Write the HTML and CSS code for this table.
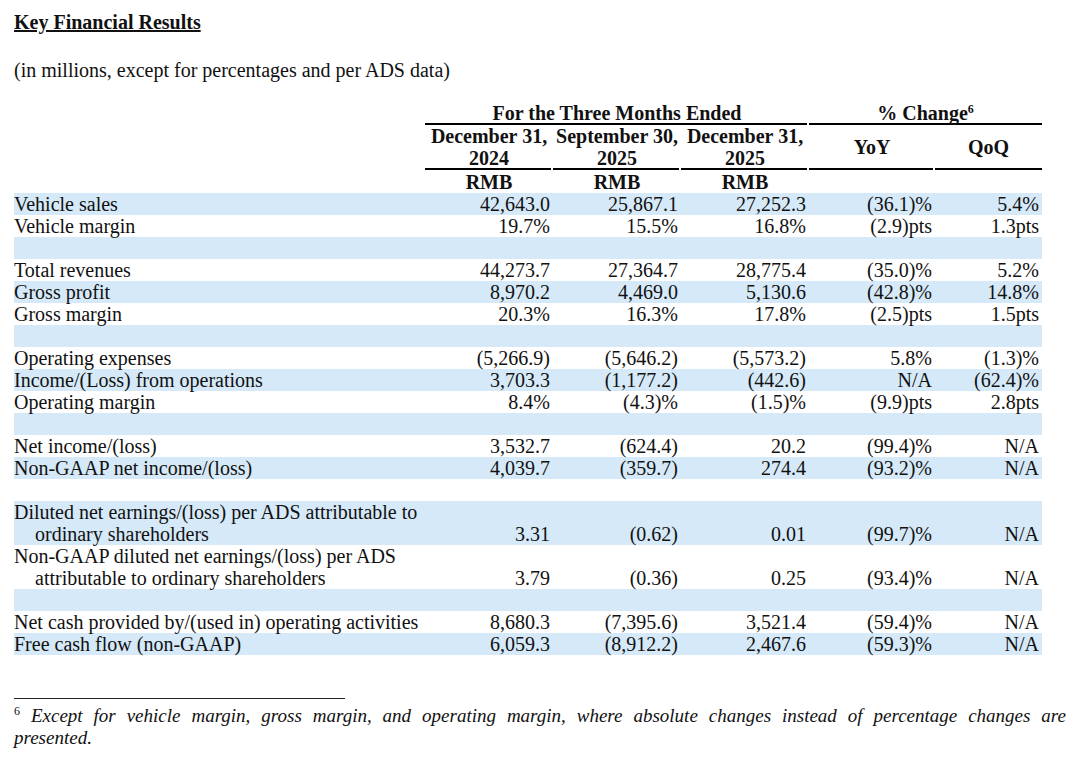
FILE: index.html
```html
<!DOCTYPE html>
<html lang="en">
<head>
  <meta charset="UTF-8">
  <title>Key Financial Results</title>
  <link rel="stylesheet" href="styles.css">
</head>
<body>

  <!-- Heading -->
  <h1 class="title">Key Financial Results</h1>
  <p class="units">(in millions, except for percentages and per ADS data)</p>

  <!-- Results table -->
  <table class="results">
    <colgroup>
      <col class="col-label">
      <col class="col-period">
      <col class="col-period">
      <col class="col-period">
      <col class="col-yoy">
      <col class="col-qoq">
    </colgroup>
    <thead>
      <tr>
        <th></th>
        <th colspan="3" class="rule">For the Three Months Ended</th>
        <th colspan="2" class="rule rule-end">% Change<sup>6</sup></th>
      </tr>
      <tr>
        <th></th>
        <th class="rule">December 31,<br>2024</th>
        <th class="rule">September 30,<br>2025</th>
        <th class="rule">December 31,<br>2025</th>
        <th class="rule">YoY</th>
        <th class="rule rule-end">QoQ</th>
      </tr>
      <tr class="currency">
        <th></th>
        <th>RMB</th>
        <th>RMB</th>
        <th>RMB</th>
        <th></th>
        <th></th>
      </tr>
    </thead>
    <tbody>
      <tr class="shade">
        <td class="label">Vehicle sales</td>
        <td class="num">42,643.0</td><td class="num">25,867.1</td><td class="num">27,252.3</td>
        <td class="num">(36.1)%</td><td class="num">5.4%</td>
      </tr>
      <tr>
        <td class="label">Vehicle margin</td>
        <td class="num">19.7%</td><td class="num">15.5%</td><td class="num">16.8%</td>
        <td class="num">(2.9)pts</td><td class="num">1.3pts</td>
      </tr>
      <tr class="shade blank"><td colspan="6"></td></tr>

      <tr>
        <td class="label">Total revenues</td>
        <td class="num">44,273.7</td><td class="num">27,364.7</td><td class="num">28,775.4</td>
        <td class="num">(35.0)%</td><td class="num">5.2%</td>
      </tr>
      <tr class="shade">
        <td class="label">Gross profit</td>
        <td class="num">8,970.2</td><td class="num">4,469.0</td><td class="num">5,130.6</td>
        <td class="num">(42.8)%</td><td class="num">14.8%</td>
      </tr>
      <tr>
        <td class="label">Gross margin</td>
        <td class="num">20.3%</td><td class="num">16.3%</td><td class="num">17.8%</td>
        <td class="num">(2.5)pts</td><td class="num">1.5pts</td>
      </tr>
      <tr class="shade blank"><td colspan="6"></td></tr>

      <tr>
        <td class="label">Operating expenses</td>
        <td class="num">(5,266.9)</td><td class="num">(5,646.2)</td><td class="num">(5,573.2)</td>
        <td class="num">5.8%</td><td class="num">(1.3)%</td>
      </tr>
      <tr class="shade">
        <td class="label">Income/(Loss) from operations</td>
        <td class="num">3,703.3</td><td class="num">(1,177.2)</td><td class="num">(442.6)</td>
        <td class="num">N/A</td><td class="num">(62.4)%</td>
      </tr>
      <tr>
        <td class="label">Operating margin</td>
        <td class="num">8.4%</td><td class="num">(4.3)%</td><td class="num">(1.5)%</td>
        <td class="num">(9.9)pts</td><td class="num">2.8pts</td>
      </tr>
      <tr class="shade blank"><td colspan="6"></td></tr>

      <tr>
        <td class="label">Net income/(loss)</td>
        <td class="num">3,532.7</td><td class="num">(624.4)</td><td class="num">20.2</td>
        <td class="num">(99.4)%</td><td class="num">N/A</td>
      </tr>
      <tr class="shade">
        <td class="label">Non-GAAP net income/(loss)</td>
        <td class="num">4,039.7</td><td class="num">(359.7)</td><td class="num">274.4</td>
        <td class="num">(93.2)%</td><td class="num">N/A</td>
      </tr>
      <tr class="blank"><td colspan="6"></td></tr>

      <tr class="shade">
        <td class="label wrap">Diluted net earnings/(loss) per ADS attributable to<br>ordinary shareholders</td>
        <td class="num">3.31</td><td class="num">(0.62)</td><td class="num">0.01</td>
        <td class="num">(99.7)%</td><td class="num">N/A</td>
      </tr>
      <tr>
        <td class="label wrap">Non-GAAP diluted net earnings/(loss) per ADS<br>attributable to ordinary shareholders</td>
        <td class="num">3.79</td><td class="num">(0.36)</td><td class="num">0.25</td>
        <td class="num">(93.4)%</td><td class="num">N/A</td>
      </tr>
      <tr class="shade blank"><td colspan="6"></td></tr>

      <tr>
        <td class="label">Net cash provided by/(used in) operating activities</td>
        <td class="num">8,680.3</td><td class="num">(7,395.6)</td><td class="num">3,521.4</td>
        <td class="num">(59.4)%</td><td class="num">N/A</td>
      </tr>
      <tr class="shade">
        <td class="label">Free cash flow (non-GAAP)</td>
        <td class="num">6,059.3</td><td class="num">(8,912.2)</td><td class="num">2,467.6</td>
        <td class="num">(59.3)%</td><td class="num">N/A</td>
      </tr>
    </tbody>
  </table>

  <!-- Footnote -->
  <div class="footnote">
    <div class="footnote-rule"></div>
    <p class="footnote-text">
      <span class="footnote-line"><sup>6</sup> Except for vehicle margin, gross margin, and operating margin, where absolute changes instead of percentage changes are</span>
      presented.
    </p>
  </div>

</body>
</html>
```

FILE: styles.css
```css
    body {
      margin: 0;
      padding: 11px 14px 0;
      font-family: "Liberation Serif", "Times New Roman", serif;
      font-size: 20px;
      color: #111;
      background-color: #fff;
    }

    .title {
      margin: 0;
      font-size: 20px;
      line-height: 22px;
      font-weight: bold;
      text-decoration: underline;
    }

    .units {
      margin: 26px 0 0;
      line-height: 22px;
    }

    /* Results table */
    .results {
      margin-top: 21px;
      width: 1028px;
      border-collapse: collapse;
      table-layout: fixed;
    }

    .col-label  { width: 411px; }
    .col-period { width: 128px; }
    .col-yoy    { width: 126px; }
    .col-qoq    { width: 107px; }

    .results th,
    .results td {
      padding: 0;
      line-height: 22px;
      white-space: nowrap;
    }

    .results th {
      font-weight: bold;
      text-align: center;
      vertical-align: top;
    }

    .results sup {
      font-size: 12px;
      line-height: 0;
      vertical-align: 7px;
    }

    /* underline under header cells, with a small gap between cells */
    .rule {
      padding-bottom: 1px !important;
      background: linear-gradient(#000, #000) no-repeat left bottom / calc(100% - 2px) 2px;
    }

    .results th.rule[rowspan],
    .results th.rule:only-child {
      vertical-align: middle;
    }

    .rule-end {
      background-size: 100% 2px;
    }

    .results tr:nth-child(2) th:nth-child(5),
    .results tr:nth-child(2) th:nth-child(6) {
      vertical-align: middle;
    }

    .results tr.currency th {
      height: 23px;
      vertical-align: bottom;
    }

    .results td.label {
      text-align: left;
    }

    .results td.wrap {
      padding-left: 21px;
      text-indent: -21px;
    }

    .results td.num {
      text-align: right;
      padding-right: 3px;
      vertical-align: bottom;
    }

    .results tr.blank td {
      height: 22px;
    }

    .results tr.shade td {
      background-color: #d5e9f8;
    }

    /* Footnote */
    .footnote {
      margin-top: 43px;
    }

    .footnote-rule {
      width: 331px;
      border-top: 1px solid #222;
    }

    .footnote-text {
      margin: 6px 0 0;
      font-size: 19px;
      line-height: 22px;
      font-style: italic;
    }

    .footnote-line {
      display: block;
      text-align: justify;
      text-align-last: justify;
    }

    .footnote-text sup {
      font-size: 12px;
      font-style: normal;
      line-height: 0;
      vertical-align: 7px;
    }
```
